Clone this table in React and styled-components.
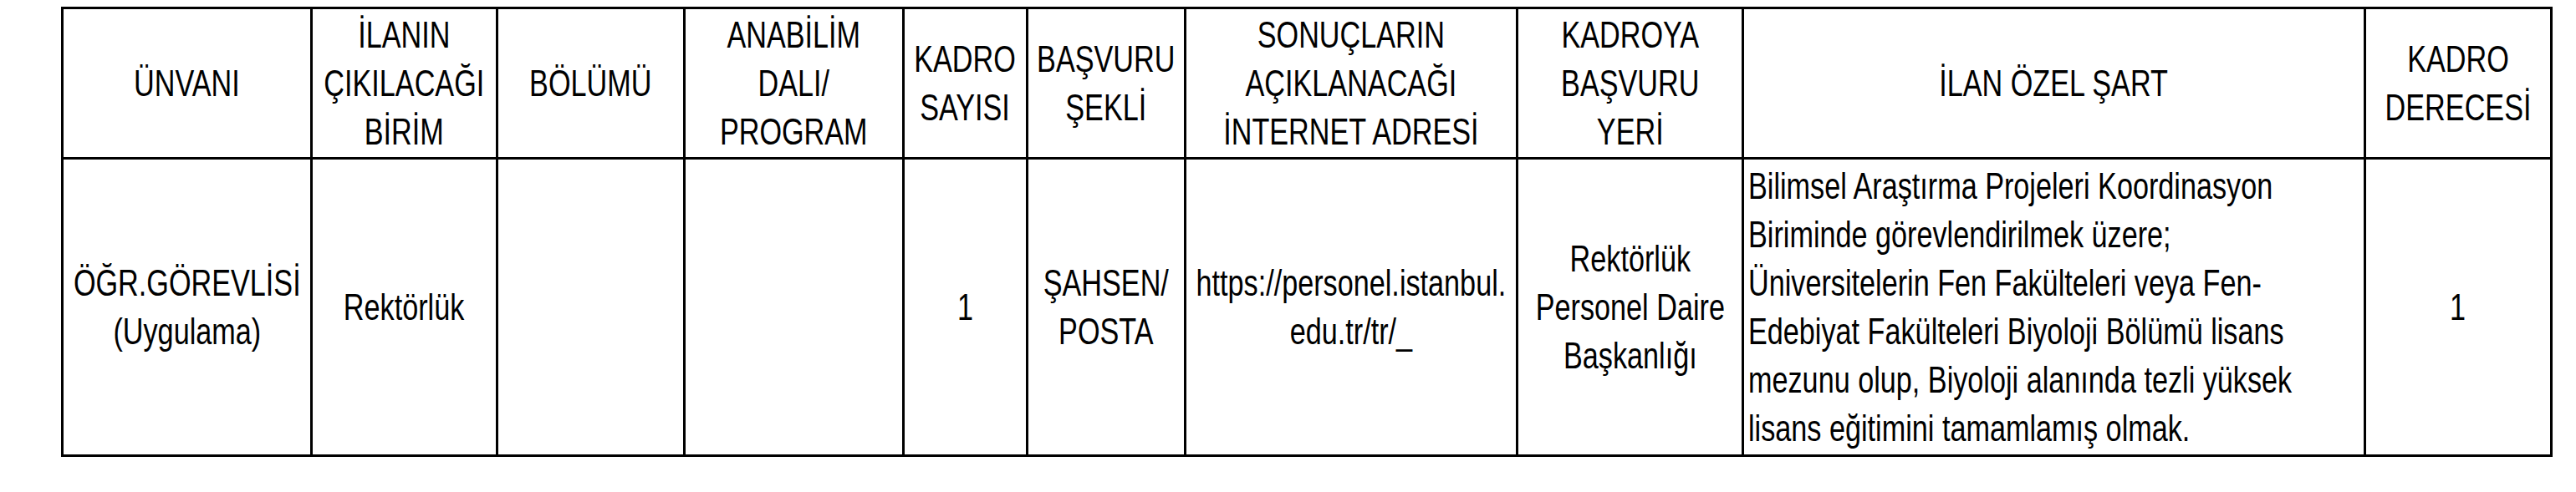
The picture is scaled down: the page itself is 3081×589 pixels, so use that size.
import React from 'react';
import styled, { createGlobalStyle } from 'styled-components';

const GlobalStyle = createGlobalStyle`
  html, body { margin: 0; padding: 0; background: #fff; }
  body { font-family: "Liberation Sans", Arial, sans-serif; color: #000; }
`;

const colWidths = [298, 222, 224, 262, 148, 189, 397, 270, 744, 223];

const headers = [
  ['ÜNVANI'],
  ['İLANIN', 'ÇIKILACAĞI', 'BİRİM'],
  ['BÖLÜMÜ'],
  ['ANABİLİM', 'DALI/', 'PROGRAM'],
  ['KADRO', 'SAYISI'],
  ['BAŞVURU', 'ŞEKLİ'],
  ['SONUÇLARIN', 'AÇIKLANACAĞI', 'İNTERNET ADRESİ'],
  ['KADROYA', 'BAŞVURU', 'YERİ'],
  ['İLAN ÖZEL ŞART'],
  ['KADRO', 'DERECESİ'],
];

const row = [
  { lines: ['ÖĞR.GÖREVLİSİ', '(Uygulama)'] },
  { lines: ['Rektörlük'] },
  { lines: [] },
  { lines: [] },
  { lines: ['1'] },
  { lines: ['ŞAHSEN/', 'POSTA'] },
  { lines: ['https://personel.istanbul.', 'edu.tr/tr/_'] },
  { lines: ['Rektörlük', 'Personel Daire', 'Başkanlığı'] },
  {
    left: true,
    lines: [
      'Bilimsel Araştırma Projeleri Koordinasyon',
      'Biriminde görevlendirilmek üzere;',
      'Üniversitelerin Fen Fakülteleri veya Fen-',
      'Edebiyat Fakülteleri Biyoloji Bölümü lisans',
      'mezunu olup, Biyoloji alanında tezli yüksek',
      'lisans eğitimini tamamlamış olmak.',
    ],
  },
  { lines: ['1'] },
];

const Page = styled.div`
  padding: 8px 0 0 73px;
`;

const Table = styled.table`
  border-collapse: collapse;
  table-layout: fixed;
  width: 2980px;
`;

const HeadRow = styled.tr`
  height: 180px;
`;

const BodyRow = styled.tr`
  height: 356px;
`;

const HeadCell = styled.th`
  border: 3px solid #000;
  padding: 0;
  font-weight: 400;
  vertical-align: middle;
`;

const Cell = styled.td`
  border: 3px solid #000;
  padding: 0 ${(p) => (p.$left ? '5px' : '0')};
  vertical-align: middle;
`;

/* Arial Narrow is not installed: condense Liberation Sans horizontally */
const Content = styled.div`
  display: flex;
  justify-content: ${(p) => (p.$left ? 'flex-start' : 'center')};
  max-width: 100%;
`;

const Narrow = styled.span`
  display: inline-block;
  flex: none;
  font-size: 45px;
  line-height: 58px;
  white-space: nowrap;
  text-align: ${(p) => (p.$left ? 'left' : 'center')};
  transform: scaleX(0.76);
  transform-origin: ${(p) => (p.$left ? 'left center' : 'center center')};
`;

const Lines = ({ lines, left }) => (
  <Content $left={left}>
    <Narrow $left={left}>
      {lines.map((l, i) => (
        <React.Fragment key={i}>
          {i > 0 && <br />}
          {l}
        </React.Fragment>
      ))}
    </Narrow>
  </Content>
);

export default function App() {
  return (
    <Page>
      <GlobalStyle />
      <Table>
        <colgroup>
          {colWidths.map((w, i) => (
            <col key={i} style={{ width: w }} />
          ))}
        </colgroup>
        <thead>
          <HeadRow>
            {headers.map((h, i) => (
              <HeadCell key={i}>
                <Lines lines={h} />
              </HeadCell>
            ))}
          </HeadRow>
        </thead>
        <tbody>
          <BodyRow>
            {row.map((c, i) => (
              <Cell key={i} $left={c.left}>
                {c.lines.length > 0 && <Lines lines={c.lines} left={c.left} />}
              </Cell>
            ))}
          </BodyRow>
        </tbody>
      </Table>
    </Page>
  );
}
